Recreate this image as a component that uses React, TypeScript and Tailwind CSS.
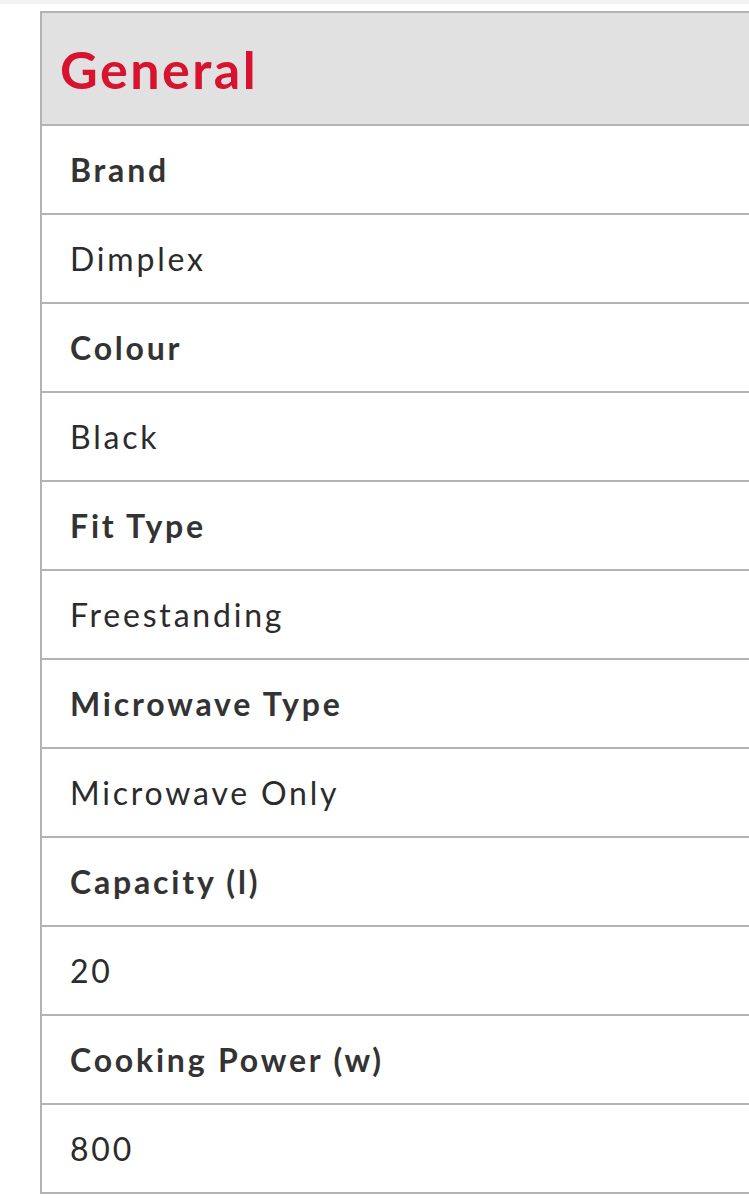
import React from "react";

const rows: [string, string][] = [
  ["Brand", "Dimplex"],
  ["Colour", "Black"],
  ["Fit Type", "Freestanding"],
  ["Microwave Type", "Microwave Only"],
  ["Capacity (l)", "20"],
  ["Cooking Power (w)", "800"],
];

export default function App() {
  return (
    <div className="w-[749px] h-[1200px] overflow-hidden bg-white" style={{ fontFamily: "Lato, 'Open Sans', sans-serif" }}>
      <div className="h-[4px] bg-[#f3f3f3]" />
      <div className="pl-[40px] pt-[7px]">
        <div className="w-[760px] border-l-2 border-t-2 border-[#b3b3b3]">
          <div className="h-[113px] bg-[#e1e1e1] border-b-2 border-[#b3b3b3] flex items-center pl-[18px]">
            <span className="text-[52px] font-bold text-[#d7132f] leading-none tracking-[2.5px]">General</span>
          </div>
          {rows.map(([label, value]) => (
            <React.Fragment key={label}>
              <div className="h-[89px] border-b-2 border-[#b3b3b3] flex items-center pl-[28px]">
                <span className="text-[32px] font-bold text-[#333333] leading-none tracking-[2.8px]">{label}</span>
              </div>
              <div className="h-[89px] border-b-2 border-[#b3b3b3] flex items-center pl-[28px]">
                <span className="text-[32px] text-[#2b2b2b] leading-none tracking-[2.8px]">{value}</span>
              </div>
            </React.Fragment>
          ))}
        </div>
      </div>
    </div>
  );
}
